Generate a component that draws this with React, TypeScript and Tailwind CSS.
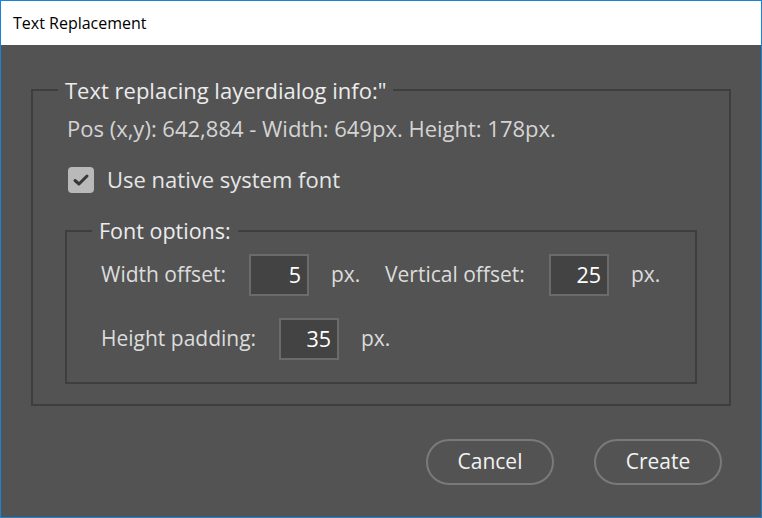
import React from "react";

const font = { fontFamily: '"Open Sans", "Noto Sans", sans-serif' };

function NumBox({ value }: { value: string }) {
  return (
    <div className="w-[60px] h-[42px] border-2 border-[#6b6b6b] bg-[#434343] flex items-center justify-end pr-[6px] text-[21.5px] text-white">
      {value}
    </div>
  );
}

export default function App() {
  return (
    <div
      className="w-[762px] h-[518px] border border-[#1883d7] flex flex-col overflow-hidden"
      style={font}
    >
      <div className="h-[44px] bg-white flex items-center pl-[12px] text-[16px] text-black shrink-0">
        Text Replacement
      </div>
      <div className="flex-1 bg-[#535353] px-[30px] pt-[32px] flex flex-col">
        <fieldset className="border-2 border-[#3e3e3e] w-[700px] pb-[20px]">
          <legend className="ml-[25px] px-[7px] h-[26px] text-[22px] leading-[26px] text-[#ececec]">
            Text replacing layerdialog info:"
          </legend>
          <div className="mt-[13px] ml-[34px] h-[24px] leading-[24px] text-[22px] text-[#d4d4d4]">
            Pos (x,y): 642,884 - Width: 649px. Height: 178px.
          </div>
          <div className="mt-[27px] ml-[35px] flex items-center h-[26px]">
            <div className="w-[26px] h-[26px] rounded-[4px] bg-[#b9b9b9] flex items-center justify-center">
              <svg width="18" height="18" viewBox="0 0 18 18">
                <path
                  d="M3 9.5 L7 13 L15 5"
                  fill="none"
                  stroke="#383838"
                  strokeWidth="3"
                  strokeLinecap="round"
                  strokeLinejoin="round"
                />
              </svg>
            </div>
            <span className="ml-[13px] -mt-[2px] text-[22px] leading-[26px] text-[#e6e6e6]">Use native system font</span>
          </div>
          <fieldset className="mt-[25px] ml-[32px] w-[632px] border-2 border-[#3e3e3e] pl-[34px] pb-[22px]">
            <legend className="-ml-[9px] px-[7px] h-[26px] text-[21.5px] leading-[26px] text-[#ececec]">
              Font options:
            </legend>
            <div className="mt-[10px] flex items-center text-[21px] text-[#dcdcdc]">
              <span className="w-[148px]">Width offset:</span>
              <NumBox value="5" />
              <span className="ml-[22px] w-[54px]">px.</span>
              <span className="w-[164px]">Vertical offset:</span>
              <NumBox value="25" />
              <span className="ml-[22px]">px.</span>
            </div>
            <div className="mt-[22px] flex items-center text-[21px] text-[#dcdcdc]">
              <span className="w-[178px]">Height padding:</span>
              <NumBox value="35" />
              <span className="ml-[22px]">px.</span>
            </div>
          </fieldset>
        </fieldset>
        <div className="mt-[33px] flex justify-end gap-[40px] pr-[9px]">
          <button className="w-[128px] h-[46px] rounded-full border-2 border-[#7a7a7a] text-[21px] text-[#f2f2f2]">
            Cancel
          </button>
          <button className="w-[128px] h-[46px] rounded-full border-2 border-[#7a7a7a] text-[21px] text-[#f2f2f2]">
            Create
          </button>
        </div>
      </div>
    </div>
  );
}
